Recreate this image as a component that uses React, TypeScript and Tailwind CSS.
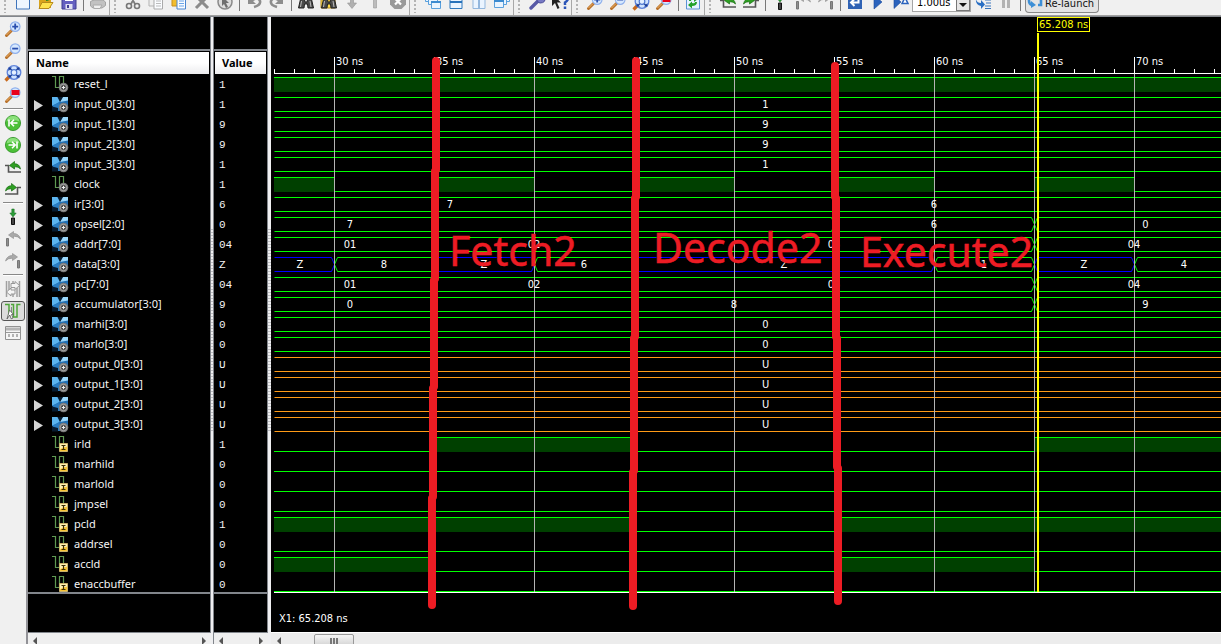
import React from "react";

type Kind = "port" | "bus" | "internal";
type Segment = { from: number; to: number; label?: string; level?: "high" | "low" | "z" | "u" };
type Signal = { name: string; value: string; kind: Kind; wave: Segment[] };

const START = 27;
const END = 76.15;

const high = (from: number, to: number): Segment => ({ from, to, level: "high" });
const low = (from: number, to: number): Segment => ({ from, to, level: "low" });
const bus = (from: number, to: number, label: string): Segment => ({ from, to, label });
const hiz = (from: number, to: number, label = "Z"): Segment => ({ from, to, label, level: "z" });
const undef = (): Segment[] => [{ from: START, to: END, label: "U", level: "u" }];
const constant = (label: string): Segment[] => [bus(START, END, label)];

const SIGNALS: Signal[] = [
  { name: "reset_l", value: "1", kind: "port", wave: [high(START, END)] },
  { name: "input_0[3:0]", value: "1", kind: "bus", wave: constant("1") },
  { name: "input_1[3:0]", value: "9", kind: "bus", wave: constant("9") },
  { name: "input_2[3:0]", value: "9", kind: "bus", wave: constant("9") },
  { name: "input_3[3:0]", value: "1", kind: "bus", wave: constant("1") },
  {
    name: "clock", value: "1", kind: "port",
    wave: [high(START, 30), low(30, 35), high(35, 40), low(40, 45), high(45, 50), low(50, 55), high(55, 60), low(60, 65), high(65, 70), low(70, END)],
  },
  { name: "ir[3:0]", value: "6", kind: "bus", wave: [bus(START, 45, "7"), bus(45, 75, "6")] },
  { name: "opsel[2:0]", value: "0", kind: "bus", wave: [bus(START, 35, "7"), bus(35, 55, ""), bus(55, 65, "6"), bus(65, END, "0")] },
  { name: "addr[7:0]", value: "04", kind: "bus", wave: [bus(START, 35, "01"), bus(35, 45, "02"), bus(45, 65, "03"), bus(65, 75, "04")] },
  {
    name: "data[3:0]", value: "Z", kind: "bus",
    wave: [hiz(START, 30), bus(30, 35, "8"), hiz(35, 40), bus(40, 45, "6"), hiz(45, 60), bus(60, 65, "1"), hiz(65, 70), bus(70, 75, "4")],
  },
  { name: "pc[7:0]", value: "04", kind: "bus", wave: [bus(START, 35, "01"), bus(35, 45, "02"), bus(45, 65, "03"), bus(65, 75, "04")] },
  { name: "accumulator[3:0]", value: "9", kind: "bus", wave: [bus(START, 35, "0"), bus(35, 65, "8"), bus(65, END, "9")] },
  { name: "marhi[3:0]", value: "0", kind: "bus", wave: constant("0") },
  { name: "marlo[3:0]", value: "0", kind: "bus", wave: constant("0") },
  { name: "output_0[3:0]", value: "U", kind: "bus", wave: undef() },
  { name: "output_1[3:0]", value: "U", kind: "bus", wave: undef() },
  { name: "output_2[3:0]", value: "U", kind: "bus", wave: undef() },
  { name: "output_3[3:0]", value: "U", kind: "bus", wave: undef() },
  { name: "irld", value: "1", kind: "internal", wave: [low(START, 35), high(35, 45), low(45, 65), high(65, END)] },
  { name: "marhild", value: "0", kind: "internal", wave: [low(START, END)] },
  { name: "marlold", value: "0", kind: "internal", wave: [low(START, END)] },
  { name: "jmpsel", value: "0", kind: "internal", wave: [low(START, END)] },
  { name: "pcld", value: "1", kind: "internal", wave: [high(START, 45), low(45, 55), high(55, END)] },
  { name: "addrsel", value: "0", kind: "internal", wave: [low(START, END)] },
  { name: "accld", value: "0", kind: "internal", wave: [high(START, 35), low(35, 55), high(55, 65), low(65, END)] },
  { name: "enaccbuffer", value: "0", kind: "internal", wave: [low(START, END)] },
];

/* ---------- icons ---------- */

const Svg = ({ children }: { children: React.ReactNode }) => (
  <svg className="size-4 shrink-0 overflow-visible" viewBox="0 0 16 16" fill="none" aria-hidden="true">{children}</svg>
);

const Lens = ({ children }: { children?: React.ReactNode }) => (
  <Svg>
    <path d="M1.5 14.500 6.500 9.500" stroke="#b8712b" strokeWidth="3" strokeLinecap="round" />
    <path d="M1.500 14 6 9.500" stroke="#f0b468" strokeWidth="1" />
    <circle cx="10.200" cy="5.600" r="4.800" fill="#d7e9ff" stroke="#8fb0ec" strokeWidth="1.200" />
    {children}
  </Svg>
);
const ZoomIn = () => <Lens><path d="M7.200 5.600h6M10.200 2.600v6" stroke="#2a4fae" strokeWidth="1.800" /></Lens>;
const ZoomOut = () => <Lens><path d="M7.200 5.600h6" stroke="#2a4fae" strokeWidth="1.800" /></Lens>;
const ZoomRect = () => <Lens><path d="M6.500 3h8v5h-8z" fill="#e8001c" /></Lens>;
const ZoomFit = () => (
  <Svg>
    <path d="M.5 15.500 4 12" stroke="#c8691c" strokeWidth="3.200" />
    <circle cx="9" cy="7.500" r="6.800" fill="#cfe3ff" stroke="#5d82da" strokeWidth="1.300" />
    <path d="m4.500 3 9 9M13.500 3l-9 9" stroke="#1d3f98" strokeWidth="1.400" />
    <path d="M3.500 2.500h3.500L3.500 6zM14.500 2.500H11L14.500 6zM3.500 12.500V9L7 12.500zM14.500 12.500V9L11 12.500z" fill="#1d3f98" />
    <circle cx="9" cy="7.500" r="2.800" fill="#e6f1ff" stroke="#4f78d0" strokeWidth="1.200" />
  </Svg>
);
const Round = ({ flip }: { flip?: boolean }) => (
  <Svg>
    <circle cx="8" cy="8" r="7.600" fill="#4cc038" stroke="#2c8f22" strokeWidth=".8" />
    <path d="M1.500 6.500a6.600 6.600 0 0 1 13 0q-6-3-13 0z" fill="#8be07b" />
    <g transform={flip ? "translate(16 0) scale(-1 1)" : undefined} stroke="#fff" strokeWidth="1.600">
      <path d="M4 4.500v7M12.500 8H6M9 4.800 5.800 8 9 11.200" />
    </g>
  </Svg>
);
const Edge = ({ flip }: { flip?: boolean }) => (
  <Svg>
    <g transform={flip ? "translate(16 0) scale(-1 1)" : undefined}>
      <path d="M0 6.500h3.500v6.500H16" stroke="#555" strokeWidth="1.600" />
      <path d="m4.500 6.500 5-4v2.200q5 0 6 5.300-2-2.500-6-2.300V10z" fill="#2e9f22" stroke="#156b10" strokeWidth=".7" />
    </g>
  </Svg>
);
const MarkerAdd = () => (
  <Svg>
    <path d="M6.800 0h2.400v4h2L8 8 4.800 4h2z" fill="#2d9d3a" stroke="#14691f" strokeWidth=".5" />
    <path d="M6.500 9h3v6.500h-3z" fill="#444" stroke="#111" />
  </Svg>
);
const MarkerMove = ({ flip }: { flip?: boolean }) => (
  <Svg>
    <g transform={flip ? "translate(16 0) scale(-1 1)" : undefined}>
      <path d="M1.500 7.500h2v7.500h-2z" fill="#8f8f8f" stroke="#777" />
      <path d="m3.500 4 5-3.500v2q5.500 0 7 5.500-2.500-3-7-2.800v2.300z" fill="#a9a9a9" stroke="#8a8a8a" strokeWidth=".6" />
    </g>
  </Svg>
);
const Swap = () => (
  <Svg>
    <path d="M1.500 0v16M4 0v9M12 7v9M14.500 0v16M8 0v5M8 11v5" stroke="#a0a0a0" strokeWidth="1.500" />
    <path d="M6 2.500h4v-2l4.500 4-4.500 4v-2H6zM10 9H6V7l-4.500 4L6 15v-2h4z" fill="#f5f5f5" stroke="#909090" strokeWidth=".9" />
  </Svg>
);
const Snap = () => (
  <Svg>
    <path d="M0 1.500h4V13M15.500 1.500H12V14H8.500V1.500H6" stroke="#4fa63a" strokeWidth="1.500" />
    <path d="M6.500 4v6" stroke="#888" />
    <path d="M2 16 4.500 7 8.500 11.500H6.500l1.500 3.500-1.800.8L4.800 12z" fill="#fff" stroke="#555" strokeWidth=".8" />
  </Svg>
);
const Grid = () => (
  <Svg>
    <path d="M.5 1.500h15v13H.5z" fill="#f6f6f6" stroke="#929292" />
    <path d="M1 4h14" stroke="#b5b5b5" strokeWidth="3" />
    <path d="M1 7.500h14" stroke="#999" />
    <path d="M3 9h2v3H3zM7 9h2v3H7zM11 9h2v3h-2z" fill="#b3b3b3" />
  </Svg>
);
const Page = () => <Svg><path d="M1.500-1h13v16h-13z" fill="#eef6ff" stroke="#3f74bb" /></Svg>;
const Open = () => (
  <Svg>
    <path d="M1 4h5l1 1h6v9H1z" fill="#d9a41d" />
    <path d="m1 14.500 3-6h11l-4 6z" fill="#ffe34f" stroke="#b68a1c" />
    <path d="M8 7q4 0 5-4h2l-2-3-4 3h2q-1 2-3 2z" fill="#2b8a22" />
  </Svg>
);
const Save = () => (
  <Svg>
    <path d="M1 1h14v14H1z" fill="#6560c0" stroke="#413d91" />
    <path d="M4 1h8v6H4z" fill="#fff" />
    <path d="M4.500 10h7v5h-7z" fill="#e1e1f2" />
    <path d="M6 11h2v3H6z" fill="#413d91" />
  </Svg>
);
const Print = () => (
  <Svg>
    <path d="M5 1h8l-2 6H3z" fill="#f7f7f7" stroke="#bbb" />
    <path d="M.5 7.500 4 6h9l2.500 2v3.500L12 14H3l-2.500-2z" fill="#c2c2c2" stroke="#a3a3a3" />
    <path d="M3 11h9l-2 3.500H4z" fill="#efefef" stroke="#aaa" />
  </Svg>
);
const Cut = () => (
  <Svg>
    <path d="M4.500 0 10 10M11.500 0 6 10" stroke="#7d7d7d" strokeWidth="1.800" />
    <circle cx="4" cy="12" r="2.500" stroke="#777" strokeWidth="1.600" />
    <circle cx="12" cy="12" r="2.500" stroke="#777" strokeWidth="1.600" />
  </Svg>
);
const Copy = ({ paste }: { paste?: boolean }) => (
  <Svg>
    <path d="M1 0h9v12H1z" fill={paste ? "#f2bd2e" : "#eee"} stroke={paste ? "#c98f1a" : "#b3b3b3"} />
    <path d="M6 4h8.500v11H6z" fill="#fafcff" stroke={paste ? "#4b86d0" : "#aaa"} />
    <path d="M8 7h5M8 9.500h5M8 12h5" stroke={paste ? "#6aa5e8" : "#bbb"} />
  </Svg>
);
const Delete = () => <Svg><path d="m2 2 12 12M14 2 2 14" stroke="#8b8b8b" strokeWidth="3" /></Svg>;
const Target = () => (
  <Svg>
    <circle cx="8" cy="8" r="7" fill="#ddd" stroke="#8a8a8a" strokeWidth="1.500" />
    <path d="m5 2 7 7H9l2 4-2 1-2-4-2 2z" fill="#6f6f6f" />
  </Svg>
);
const Undo = ({ flip }: { flip?: boolean }) => (
  <Svg>
    <g transform={flip ? "translate(16 0) scale(-1 1)" : undefined}>
      <path d="M5 7q7-5 9 0 1 4-6 6" stroke="#8d8d8d" strokeWidth="2.600" />
      <path d="M2 2v8h8z" fill="#8d8d8d" />
    </g>
  </Svg>
);
const Find = ({ folder }: { folder?: boolean }) => (
  <Svg>
    {folder && <path d="M0 2h7l1 1h6v11H0z" fill="#ffdc4a" stroke="#b88d1f" />}
    <path d="M3 3h3l1 5h2l1-5h3l2.500 11H10l-.5-4h-3L6 14H.5z" fill="#4a4a4a" stroke="#222" />
    <path d="M3.500 7 2.500 13M12 7l1 6" stroke="#bbb" />
  </Svg>
);
const Down = () => <Svg><path d="M6.500 0h3v9h3L8 14.500 3.500 9h3z" fill="#b0b0b0" stroke="#949494" strokeWidth=".6" /></Svg>;
const Bar = () => <Svg><path d="M6.500 0h3v14h-3z" fill="#bcbcbc" stroke="#999" strokeWidth=".6" /></Svg>;
const Stop = () => (
  <Svg>
    <path d="M4.500 0h7L16 4.500v6L11.500 15h-7L0 10.500v-6z" fill="#9a9a9a" />
    <path d="m5 4.500 6 6M11 4.500l-6 6" stroke="#fff" strokeWidth="2.200" />
  </Svg>
);
const Cascade = ({ up }: { up?: boolean }) => (
  <Svg>
    {(up ? [[6, 0], [3, 3], [0, 6]] : [[0, 0], [3, 3], [6, 7]]).map(([x, y]) => (
      <g key={x}>
        <path d={`M${x + 0.5} ${y + 0.5}h9v7h-9z`} fill="#e9f4ff" stroke="#5aa0dc" />
        <path d={`M${x} ${y + 1}h10`} stroke="#3c8bd0" strokeWidth="2" />
      </g>
    ))}
  </Svg>
);
const Tile = ({ vertical }: { vertical?: boolean }) => (
  <Svg>
    <path d="M2 0h12v14.500H2z" fill="#eaf4ff" stroke={vertical ? "#93b7dd" : "#2f78bd"} />
    <path d={vertical ? "M8 0v15" : "M2 8h12"} stroke={vertical ? "#93b7dd" : "#2872ba"} strokeWidth="2" />
  </Svg>
);
const Wrench = () => (
  <Svg>
    <path d="m2 14 7-7" stroke="#5759a6" strokeWidth="3.400" strokeLinecap="round" />
    <path d="M8 2q3-3 6-1l-3 3 2 2 3-3q1 6-5 6Q7 8 8 2z" fill="#7779c4" stroke="#4b4d98" />
  </Svg>
);
const Help = () => (
  <Svg>
    <path d="M0 0v12l3-3 2.500 6 2-1L5 8.500h4z" fill="#222" />
    <path d="M9.500 5q0-4 3.500-4t3 3.500q0 2-3 4V11M13 12.500V15" stroke="#2b55b8" strokeWidth="2.500" />
  </Svg>
);
const Refresh = () => (
  <Svg>
    <path d="M1.500 0h13v15h-13z" fill="#e5f2ff" stroke="#5c93d6" />
    <path d="M4 7q0-4 5-3.500V1l4 4-4 3V6q-3-1-3 1zM12 8q0 4-5 4v2.500L3 11l4-3.500V9q3 1 3-1z" fill="#22a22a" />
  </Svg>
);
const Restart = () => (
  <Svg>
    <path d="M1 0h14v15H1z" fill="#2f62b4" />
    <path d="M4.500 8.500h7V4M7.500 5l-3.500 3.500L7.500 12" stroke="#fff" strokeWidth="2" />
  </Svg>
);
const Play = ({ timed }: { timed?: boolean }) => (
  <Svg>
    <path d={timed ? "M1 1.500 8 8l-7 6.500z" : "M4 1l8 7-8 7z"} fill="#2a63bd" stroke="#1d4b9a" strokeWidth=".6" />
    {timed && <path d="m9 9.500 3-6 3 6z" fill="#fff" stroke="#2a63bd" strokeWidth="1.500" />}
  </Svg>
);
const Step = () => (
  <Svg>
    <path d="M1 4q0 5 5 5V6l4 4.500L6 15v-3q-6-1-5-8z" fill="#2a6fc4" />
    <path d="M10 6h6M11 9h5M10 12h6M10 14.500h6" stroke="#3974bd" strokeWidth="1.200" />
  </Svg>
);
const Pause = () => <Svg><path d="M4 1h3v13H4zM9 1h3v13H9z" fill="#b3b3b3" /></Svg>;
const Relaunch = () => (
  <Svg>
    <path d="M5 3H2v6q0 3 3 4M11 13h3V6q0-3-3-4" stroke="#3d8fd6" strokeWidth="2.600" />
    <path d="m4 9 5 4-5 3zM12 0 7 3l5 4z" fill="#3d8fd6" />
  </Svg>
);

const SignalIcon = ({ kind }: { kind: Kind }) => (
  <Svg>
    {kind === "bus" ? (
      <>
        <path d="M0 1h16v8L9 15 0 10z" fill="#1f6fb4" />
        <path d="M0 1h5.500l2.500 4.500L0 10z" fill="#5cb4ee" />
        <path d="M16 1h-5L8 6l8-1.500z" fill="#9ad6fa" />
        <path d="M5.500 1H11L8 6z" fill="#06182c" />
        <path d="M0 9.500 7 7l3 8H4z" fill="#2a7dc2" />
        <path d="M0 10.500 6 12v3.500H0z" fill="#071a2e" />
      </>
    ) : (
      <path d="M0 .5h3.500v11H7.500V.5h4V8" stroke="#5f9a52" strokeWidth="1.200" />
    )}
    {kind === "internal" ? (
      <>
        <path d="M7.500 7.500h8v8h-8z" fill="#f7c433" stroke="#c9b06b" />
        <path d="M8 8h7v2.500L8 13z" fill="#fff0b0" />
        <path d="M9.500 9.500h4M11.500 9.500v4M9.500 13.500h4" stroke="#3b2c00" strokeWidth="1.200" />
      </>
    ) : (
      <>
        <circle cx="11.500" cy="11.500" r="4.800" fill="#7a7a7a" />
        <circle cx="11.500" cy="11.500" r="3.200" fill="#4a4a4a" stroke="#bdbdbd" strokeWidth=".8" />
        <path d="M9.800 11.500h3.400M11.500 9.800v3.400" stroke="#eee" strokeWidth="1" />
      </>
    )}
  </Svg>
);

/* ---------- toolbar ---------- */

type Tool = [string, React.ReactNode] | "|";

const Tools = ({ items }: { items: Tool[] }) => (
  <>
    {items.map((item, i) =>
      item === "|" ? (
        <span key={i} className="flex h-[11px] w-[6px] justify-center"><span className="w-px bg-[#777]" /></span>
      ) : (
        <button key={i} type="button" aria-label={item[0]} className="flex h-[10px] w-[23px] items-end justify-center">{item[1]}</button>
      )
    )}
  </>
);

const Grip = () => (
  <span className="ml-1 mr-[5px] h-[13px] w-[2px] bg-[repeating-linear-gradient(#b4b4b4_0px,#b4b4b4_2px,transparent_2px,transparent_4px)]" />
);

const Group = ({ children }: { children: React.ReactNode }) => (
  <div className="flex h-[15px] shrink-0 items-start border-r border-[#a8a8a8]">
    <Grip />
    {children}
  </div>
);

const Toolbar = () => (
  <header className="flex h-4 shrink-0 overflow-hidden border-b border-[#a0a0a0] bg-[#f0f0f0]">
    <Group>
      <Tools items={[["New", <Page />], ["Open", <Open />], ["Save", <Save />], "|", ["Print", <Print />]]} />
    </Group>
    <Group>
      <Tools items={[
        ["Cut", <Cut />], ["Copy", <Copy />], ["Paste", <Copy paste />], ["Delete", <Delete />], ["Select", <Target />], "|",
        ["Undo", <Undo />], ["Redo", <Undo flip />], "|",
        ["Find", <Find />], ["Find in files", <Find folder />], ["Next", <Down />], ["Previous", <Bar />], ["Stop", <Stop />],
      ]} />
    </Group>
    <Group>
      <Tools items={[["Cascade", <Cascade />], ["Tile rows", <Tile />], ["Tile columns", <Tile vertical />], ["Layers", <Cascade up />]]} />
    </Group>
    <Group>
      <Tools items={[["Settings", <Wrench />], ["What is this", <Help />]]} />
    </Group>
    <Group>
      <Tools items={[["Zoom in", <ZoomIn />], ["Zoom out", <ZoomOut />], ["Zoom fit", <ZoomFit />], ["Zoom area", <ZoomRect />], "|", ["Refresh", <Refresh />]]} />
    </Group>
    <div className="flex h-[15px] shrink-0 items-start">
      <Grip />
      <Tools items={[
        ["Previous edge", <Edge />], ["Next edge", <Edge flip />], "|",
        ["Add marker", <MarkerAdd />], ["Previous marker", <MarkerMove />], ["Next marker", <MarkerMove flip />], "|",
        ["Restart", <Restart />], ["Run", <Play />], ["Run for time", <Play timed />],
      ]} />
      <div className="flex h-3 w-[59px] items-end border border-t-0 border-[#a5a5a5] bg-white">
        <input aria-label="Run time" defaultValue="1.00us" className="h-4 w-[43px] min-w-0 bg-transparent pl-1 font-['DejaVu_Sans_Condensed',sans-serif] text-[11px] leading-4 outline-none" />
        <button type="button" aria-label="Run time choices" className="flex h-3 w-[14px] items-center justify-center border border-t-0 border-[#777] bg-[#e6e6e6]">
          <svg className="h-1 w-2" viewBox="0 0 8 4" aria-hidden="true"><path d="M0 0h8L4 4z" fill="#111" /></svg>
        </button>
      </div>
      <Tools items={[["Step", <Step />], ["Break", <Pause />], "|"]} />
      <button type="button" className="ml-[2px] flex h-[13px] w-[74px] items-end rounded-b border border-t-0 border-[#888] bg-[#e4e4e4] pb-1 pl-px font-['DejaVu_Sans_Condensed',sans-serif] text-[11px] leading-[13px] text-[#111]">
        <Relaunch />
        <span className="-mb-[2px] pl-[2px] whitespace-nowrap">Re-launch</span>
      </button>
    </div>
  </header>
);

const SideBar = () => {
  const items: (Tool | ["on", string, React.ReactNode])[] = [
    ["Zoom in", <ZoomIn />], ["Zoom out", <ZoomOut />], ["Zoom to full view", <ZoomFit />], ["Zoom to cursor", <ZoomRect />], "|",
    ["Go to start", <Round />], ["Go to end", <Round flip />], ["Previous transition", <Edge />], ["Next transition", <Edge flip />], "|",
    ["Add marker", <MarkerAdd />], ["Previous marker", <MarkerMove />], ["Next marker", <MarkerMove flip />], "|",
    ["Swap cursors", <Swap />], ["on", "Snap to transition", <Snap />], ["Floating ruler", <Grid />],
  ];
  return (
    <nav className="flex w-7 shrink-0 flex-col items-center border-r-2 border-r-[#929297] bg-[#f0f0f0] pt-px">
      {items.map((item, i) => {
        if (item === "|") return <span key={i} className="my-[2px] h-[2px] w-5 border-t border-[#888] bg-white" />;
        const on = item.length === 3;
        const [label, icon] = on ? [item[1] as string, item[2]] : [item[0], item[1]];
        return (
          <button key={i} type="button" aria-label={label} aria-pressed={on} className="flex h-[22px] w-full items-center justify-center">
            <span className={on ? "flex h-5 w-6 items-center justify-center rounded-[3px] border border-[#555] bg-[#dcdcdc]" : "flex"}>{icon}</span>
          </button>
        );
      })}
    </nav>
  );
};

/* ---------- signal panes ---------- */

const Arrow = ({ right }: { right?: boolean }) => (
  <svg className="h-2 w-1" viewBox="0 0 4 8" aria-hidden="true"><path d={right ? "M0 0v8l4-4z" : "M4 0v8L0 4z"} fill="#555" /></svg>
);

const ListPane = ({ title, width, children }: { title: string; width: string; children: React.ReactNode }) => (
  <section className={`flex shrink-0 flex-col ${width}`}>
    <div className="flex flex-1 flex-col overflow-hidden border-r border-b border-[#82868c] bg-black">
      <div className="mb-px h-[34px] shrink-0 border-b-2 border-[#82868c]" />
      <table className="w-full table-fixed border-collapse text-[#f4f4f4]">
        <thead>
          <tr className="h-[22px]">
            <th className="p-0 px-px text-left">
              <div className="h-[22px] bg-linear-to-b from-white from-50% to-[#ececee] pl-[7px] font-['Noto_Sans','Open_Sans',sans-serif] text-[11px] leading-[22px] font-bold text-black">{title}</div>
            </th>
          </tr>
        </thead>
        <tbody>{children}</tbody>
      </table>
      <div className="-mt-[2px] h-[2px] shrink-0 bg-[#82868c]" />
    </div>
    <div className="flex h-[11px] shrink-0 items-center justify-between bg-[#efefef] px-[5px] pt-[5px]">
      <Arrow /><Arrow right />
    </div>
  </section>
);

const Splitter = ({ edged }: { edged?: boolean }) => (
  <div className={`flex w-[3px] shrink-0 items-center bg-[#efeff1] ${edged ? "border-r border-[#82868c]" : ""}`}>
    <span className="h-[204px] w-full bg-[repeating-linear-gradient(#bdbdc2_0px,#bdbdc2_1px,transparent_1px,transparent_3px)]" />
  </div>
);

/* ---------- waveform ---------- */

const ORIGIN = 63;
const px = (t: number) => Math.round(ORIGIN + (t - 30) * 20);
const rowTop = (i: number) => 60 + i * 20;
const WIDE = 4000;
const COLORS = { bus: "#00ff00", z: "#0000ff", u: "#ff9b17" };

const Wave = ({ wave, row }: { wave: Segment[]; row: number }) => {
  const y = rowTop(row);
  return (
    <g>
      {wave.map((s, i) => {
        const last = i === wave.length - 1;
        const x1 = px(s.from);
        const x2 = last ? WIDE : px(s.to);
        if (s.level === "high")
          return (
            <g key={i}>
              <rect x={x1} y={y} width={x2 - x1} height={15} fill="#004000" />
              <rect x={x1} y={y} width={x2 - x1} height={1} fill="#00ff00" />
            </g>
          );
        if (s.level === "low") return <rect key={i} x={x1} y={y + 14} width={x2 - x1} height={1} fill="#00ff00" />;
        const color = s.level === "z" ? COLORS.z : s.level === "u" ? COLORS.u : COLORS.bus;
        const start = i === 0 ? [`M${x1} ${y}`, `M${x1} ${y + 14}`] : [`M${x1} ${y + 7}L${x1 + 3} ${y}`, `M${x1} ${y + 7}L${x1 + 3} ${y + 14}`];
        const finish = last ? `H${x2}` : `H${x2 - 3}L${x2} ${y + 7}`;
        return (
          <path
            key={i}
            transform="translate(.5 .5)"
            d={start[0] + finish + start[1] + finish}
            stroke={color}
            fill="none"
          />
        );
      })}
    </g>
  );
};

const WaveLabels = ({ wave, row }: { wave: Segment[]; row: number }) => (
  <g>
    {wave.map((s, i) =>
      s.label ? (
        <text key={i} x={(px(s.from) + px(s.to)) / 2 - (s.from === START && s.to < END ? 4 : 0)} y={rowTop(row) + 11} textAnchor="middle">{s.label}</text>
      ) : null
    )}
  </g>
);

const Waveform = () => {
  const ticks = Array.from({ length: 48 }, (_, i) => START + i);
  const majors = ticks.filter((t) => t % 5 === 0);
  return (
    <svg className="block size-full font-['DejaVu_Sans_Condensed',sans-serif] text-[11px]" role="img" aria-label="Simulation waveforms">
      {SIGNALS.map((s, i) => <Wave key={s.name} wave={s.wave} row={i} />)}
      <rect x={3} y={56} width={WIDE} height={1} fill="#fff" />
      <rect x={3} y={575} width={WIDE} height={1} fill="#fff" />
      {ticks.map((t) => <rect key={t} x={px(t)} y={52} width={1} height={4} fill="#fff" />)}
      {majors.map((t) => (
        <g key={t}>
          <rect x={px(t)} y={57} width={1} height={518} fill="#b4b4b4" />
          <rect x={px(t)} y={40} width={1} height={16} fill="#fff" />
          <text x={px(t) + 2} y={48} fill="#fff">{t} ns</text>
        </g>
      ))}
      <g fill="#fff">{SIGNALS.map((s, i) => <WaveLabels key={s.name} wave={s.wave} row={i} />)}</g>
      <rect x={766} y={16} width={2} height={559} fill="#ff0" />
      <rect x={766.5} y={0.5} width={52} height={14} fill="#000" stroke="#ff0" />
      <text x={768} y={11} fill="#ff0">65.208 ns</text>
      <text x={8} y={605} fill="#fff">X1: 65.208 ns</text>
      <g stroke="#ed1c24" strokeWidth={8} strokeLinecap="round" strokeLinejoin="round" fill="none">
        <path d="M165 44V153L164 154V262L163 263V370L162 371V480L161 481V588" />
        <path d="M365 44V180L364 181V320L363 321V454L362 455V589" />
        <path d="M564 49V180L565 181V320L566 321V450L567 451V584" />
      </g>
      <g fill="#ed1c24" stroke="#ed1c24" strokeWidth=".5" className="font-['Noto_Sans','Open_Sans',sans-serif] text-[41px]">
        <text x={178} y={249}>Fetch2</text>
        <text x={382} y={246}>Decode2</text>
        <text x={589} y={250}>Execute2</text>
      </g>
    </svg>
  );
};

export default function App() {
  return (
    <div className="flex h-screen flex-col overflow-hidden bg-[#f0f0f0]">
      <Toolbar />
      <main className="flex min-h-0 flex-1 border-t border-[#82868c]">
        <SideBar />
        <ListPane title="Name" width="w-[183px]">
          {SIGNALS.map((s) => (
            <tr key={s.name} className="h-5">
              <td className="p-0">
                <div className="flex h-5 items-center pl-1.5">
                  <span className="flex w-[18px] pt-[2px]">
                    {s.kind === "bus" && (
                      <svg className="h-[11px] w-[9px]" viewBox="0 0 9 11" aria-hidden="true"><path d="M0 0v11l9-5.500z" fill="#d4d4d4" /></svg>
                    )}
                  </span>
                  <SignalIcon kind={s.kind} />
                  <span className="pl-1.5 font-['Noto_Sans','Open_Sans',sans-serif] text-[11px] leading-5 whitespace-nowrap">{s.name}</span>
                </div>
              </td>
            </tr>
          ))}
        </ListPane>
        <Splitter edged />
        <ListPane title="Value" width="w-[54px]">
          {SIGNALS.map((s) => (
            <tr key={s.name} className="h-5">
              <td className="h-5 p-0 pl-[5px] font-['Liberation_Mono',monospace] text-[11px] leading-5">
                <div className="h-5 pt-px">{s.value}</div>
              </td>
            </tr>
          ))}
        </ListPane>
        <Splitter />
        <section className="flex min-w-0 flex-1 flex-col">
          <div className="min-h-0 flex-1 overflow-hidden border-b border-white bg-black"><Waveform /></div>
          <div className="flex h-[11px] shrink-0 items-start bg-[#ececec] pl-1.5">
            <span className="w-[37px] pt-1"><Arrow /></span>
            <button type="button" aria-label="Scroll waveform" className="mt-px flex h-[14px] w-10 shrink-0 items-center justify-center gap-px rounded-t-[2px] border border-[#999] bg-linear-to-b from-[#f6f6f6] to-[#cfcfcf]">
              <span className="h-1.5 w-[2px] bg-[#777]" /><span className="h-1.5 w-[2px] bg-[#777]" /><span className="h-1.5 w-[2px] bg-[#777]" />
            </button>
          </div>
        </section>
      </main>
    </div>
  );
}
